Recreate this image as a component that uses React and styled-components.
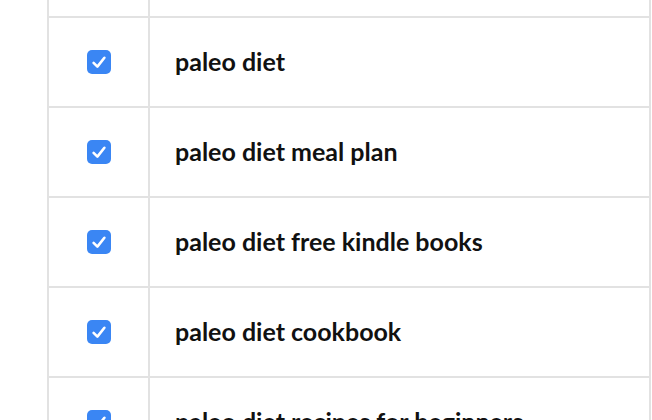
import React from 'react'
import styled, { createGlobalStyle } from 'styled-components'

const GlobalStyle = createGlobalStyle`
    html, body {
        margin: 0;
        padding: 0;
        background: #ffffff;
        overflow: hidden;
    }
    body {
        font-family: Lato, "Open Sans", sans-serif;
    }
`

const Page = styled.div`
    width: 652px;
    height: 420px;
    overflow: hidden;
    padding-left: 47px;
    box-sizing: border-box;
`

const Table = styled.div`
    margin-top: -72px;
    width: 604px;
    border-left: 2px solid #e2e2e2;
    border-right: 2px solid #e2e2e2;
    box-sizing: border-box;
`

const Row = styled.div`
    display: grid;
    grid-template-columns: 99px 2px 1fr;
    height: 90px;
    border-bottom: 2px solid #e2e2e2;
    box-sizing: border-box;
`

const CheckCell = styled.div`
    display: flex;
    align-items: center;
    justify-content: center;
`

const Divider = styled.div`
    background: #e2e2e2;
`

const KeywordCell = styled.div`
    display: flex;
    align-items: center;
    padding-left: 25px;
    padding-bottom: 3px;
    font-size: 25px;
    font-weight: 700;
    color: #111111;
    white-space: nowrap;
`

const Box = styled.span`
    width: 24px;
    height: 24px;
    border-radius: 5px;
    background: ${p => (p.checked ? '#3a86f4' : '#ffffff')};
    display: block;
`

function Check({ checked }) {
    return (
        <Box checked={checked}>
            {checked && (
                <svg width="24" height="24" viewBox="0 0 24 24" style={{ display: 'block' }}>
                    <path d="M6.6 12.8 L10.4 16.6 L17.4 7.8" fill="none" stroke="#fff" strokeWidth="2.6" strokeLinecap="round" strokeLinejoin="round" />
                </svg>
            )}
        </Box>
    )
}

const keywords = [
    'paleo',
    'paleo diet',
    'paleo diet meal plan',
    'paleo diet free kindle books',
    'paleo diet cookbook',
    'paleo diet recipes for beginners',
]

export default function App() {
    return (
        <Page>
            <GlobalStyle />
            <Table>
                {keywords.map(k => (
                    <Row key={k}>
                        <CheckCell><Check checked /></CheckCell>
                        <Divider />
                        <KeywordCell>{k}</KeywordCell>
                    </Row>
                ))}
            </Table>
        </Page>
    )
}
